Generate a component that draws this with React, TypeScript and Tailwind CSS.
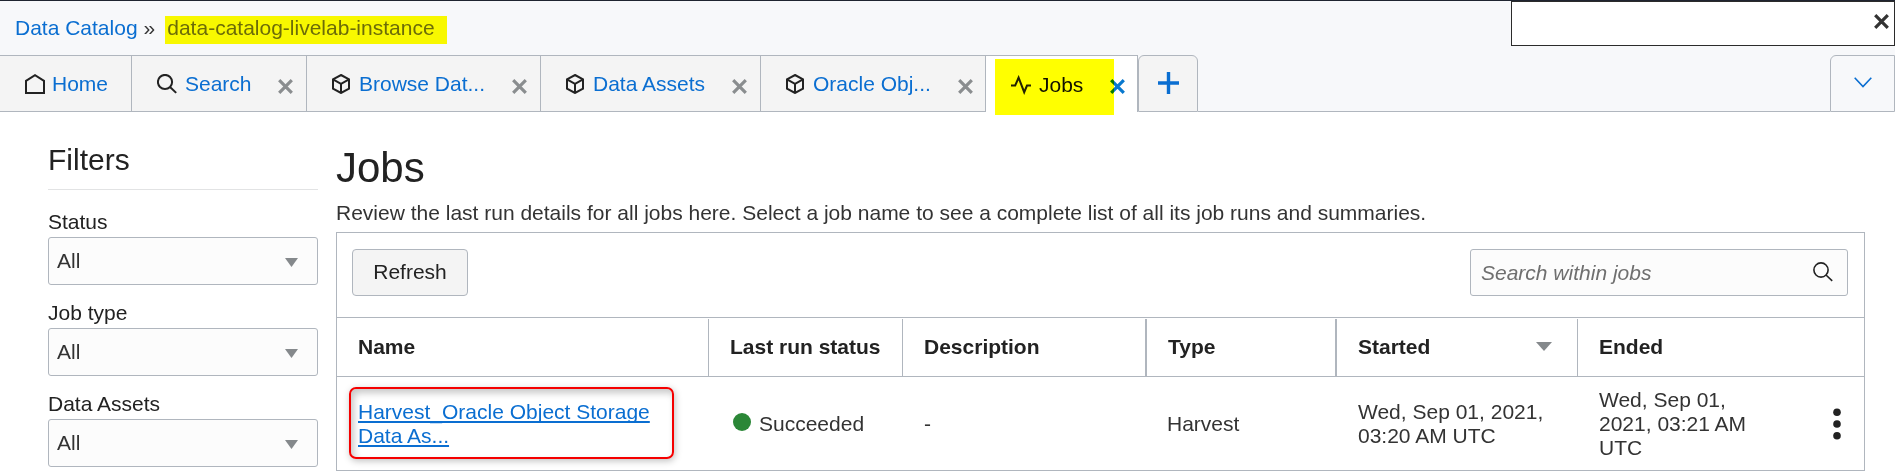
import React from "react";

type IconProps = { className?: string };

const HomeIcon = () => (
  <svg width="20" height="20" viewBox="0 0 20 20" fill="none" stroke="#222" strokeWidth="2">
    <path d="M1 19V6.8L10 1.2L19 6.8V19Z" />
  </svg>
);

const SearchIcon = ({ className = "" }: IconProps) => (
  <svg className={className} width="20" height="20" viewBox="0 0 20 20" fill="none" stroke="#222">
    <circle cx="8" cy="8" r="7.1" />
    <path d="M13 13L19.2 18.9" />
  </svg>
);

const CubeIcon = () => (
  <svg width="20" height="20" viewBox="0 0 20 20" fill="none" stroke="#222" strokeWidth="2">
    <path d="M9 1L17 5.4V14.6L9 19L1 14.6V5.4Z" />
    <path d="M1 5.4L9 9.8L17 5.4M9 9.8V19" />
  </svg>
);

const PulseIcon = () => (
  <svg width="20" height="20" viewBox="0 0 20 20" fill="none" stroke="#222" strokeWidth="2">
    <path d="M0 10.5H4.2L7.6 2.6L13.2 17.2L16 10.5H20" />
  </svg>
);

const CloseIcon = ({ className = "" }: IconProps) => (
  <svg className={className} width="15" height="15" viewBox="0 0 15 15" fill="none" stroke="currentColor" strokeWidth="3.2">
    <path d="M1.2 1.2L13.8 13.8M13.8 1.2L1.2 13.8" />
  </svg>
);

const Caret = ({ className = "" }: IconProps) => (
  <svg className={className} width="16" height="9" viewBox="0 0 16 9" preserveAspectRatio="none">
    <path d="M0 0H16L8 9Z" fill="#85898c" />
  </svg>
);

function Tab({ width, icon, label }: { width: string; icon: React.ReactNode; label: string }) {
  return (
    <div className={`flex items-center border-y border-r border-[#b0b6be] bg-[#f4f4f4] pl-[25px] ${width}`}>
      {icon}
      <span className="ml-[7px] whitespace-nowrap text-[#0a6ed1]">{label}</span>
      {label !== "Home" && <CloseIcon className="ml-auto mt-[5px] text-[#8a8d8f]" />}
    </div>
  );
}

function Filter({ label }: { label: string }) {
  return (
    <div className="flex h-[91px] flex-col">
      <label className="h-[27px] leading-[24px] text-[#222]">{label}</label>
      <div className="flex h-[48px] items-center justify-between rounded-[3px] border border-[#b0b6be] bg-[#fcfcfc] pl-[8px] pr-[19px]">
        <span>All</span>
        <Caret className="mt-[3px] h-[9px] w-[13px]" />
      </div>
    </div>
  );
}

const columns = "grid grid-cols-[372px_194px_244px_190px_241px_285px]";
const head = "flex items-center border-[#b0b6be] pb-[2px] pl-[21px]";
const cell = "flex items-center pl-[21px]";

export default function App() {
  return (
    <div className="flex h-[471px] w-[1895px] flex-col overflow-hidden bg-white font-['Liberation_Sans',Arial,sans-serif] text-[21px] leading-[24px] text-[#333]">
      <header className="flex h-[55px] shrink-0 justify-between border-t border-[#1f2430] bg-[#f7f8fa]">
        <nav className="flex items-start pl-[15px] pt-[15px]">
          <span className="text-[#0a6ed1]">Data Catalog</span>
          <span className="ml-[6px]">»</span>
          <span className="ml-[10px] h-[28px] w-[282px] bg-[#f8f800] pl-[2px] text-[#6c6c08]">
            data-catalog-livelab-instance
          </span>
        </nav>
        <div className="flex h-[45px] w-[384px] items-start justify-end border border-[#2b2b2b] bg-white pr-[5px] pt-[12px]">
          <CloseIcon className="text-[#333]" />
        </div>
      </header>

      <div className="flex h-[57px] shrink-0 bg-[#f7f8fa]">
        <Tab width="w-[132px]" icon={<HomeIcon />} label="Home" />
        <Tab width="w-[175px] pr-[13px]" icon={<SearchIcon className="mr-[1px] stroke-[2]" />} label="Search" />
        <Tab width="w-[234px] pr-[13px]" icon={<CubeIcon />} label="Browse Dat..." />
        <Tab width="w-[220px] pr-[13px]" icon={<CubeIcon />} label="Data Assets" />
        <Tab width="w-[225px] pr-[12px]" icon={<CubeIcon />} label="Oracle Obj..." />
        <div className="relative flex w-[152px] items-center border-r border-t border-[#b0b6be] bg-white pl-[25px] pr-[12px] pt-[1px]">
          <PulseIcon />
          <span className="ml-[8px] text-[#111]">Jobs</span>
          <CloseIcon className="ml-auto mt-[4px] text-[#0878ce]" />
          <div className="absolute left-[9px] top-[3px] z-10 h-[56px] w-[119px] bg-[#ffff00] mix-blend-multiply" />
        </div>
        <div className="flex w-[60px] items-center justify-center rounded-t-[6px] border border-[#b0b6be] bg-[#f4f4f4]">
          <svg className="-mt-[2px] ml-[1px]" width="21" height="22" viewBox="0 0 21 22" fill="none" stroke="#0a6ed1" strokeWidth="3.4">
            <path d="M10.5 0V22M0 11H21" />
          </svg>
        </div>
        <div className="flex-1 border-b border-[#b0b6be]" />
        <div className="flex w-[65px] items-center justify-center rounded-tl-[6px] border border-[#b0b6be]">
          <svg className="-mt-[3px]" width="18" height="11" viewBox="0 0 18 11" fill="none" stroke="#0a6ed1" strokeWidth="1.6">
            <path d="M.7 .7L9 9.6L17.3 .7" />
          </svg>
        </div>
      </div>

      <main className="flex h-[359px] shrink-0 pl-[48px]">
        <aside className="flex w-[270px] shrink-0 flex-col">
          <h2 className="h-[78px] shrink-0 border-b border-[#e2e3e4] pt-[30px] text-[30px] leading-[36px] text-[#222]">Filters</h2>
          <div className="flex flex-col pt-[20px]">
            <Filter label="Status" />
            <Filter label="Job type" />
            <Filter label="Data Assets" />
          </div>
        </aside>

        <section className="ml-[18px] flex w-[1529px] shrink-0 flex-col">
          <h1 className="h-[89px] shrink-0 pt-[32px] text-[42px] leading-[48px] text-[#222]">Jobs</h1>
          <p className="h-[31px] shrink-0 whitespace-nowrap">
            Review the last run details for all jobs here. Select a job name to see a complete list of all its job runs and summaries.
          </p>
          <div className="flex h-[239px] shrink-0 flex-col border border-[#b0b6be]">
            <div className="flex h-[84px] shrink-0 items-start justify-between pl-[15px] pr-[16px] pt-[16px]">
              <button className="h-[47px] w-[116px] rounded-[4px] border border-[#b0b6be] bg-[#f4f4f4] pb-[2px] text-[#222]">Refresh</button>
              <div className="flex h-[47px] w-[378px] items-center justify-between rounded-[3px] border border-[#b0b6be] bg-[#fcfcfc] pl-[10px] pr-[14px]">
                <span className="italic text-[#6f6f6f]">Search within jobs</span>
                <SearchIcon className="-mt-[2px] stroke-[1.6]" />
              </div>
            </div>
            <div className={`${columns} h-[60px] shrink-0 border-y border-[#b0b6be] pt-[1px] font-bold text-[#222]`}>
              <div className={`${head} border-r`}>Name</div>
              <div className={`${head} border-r`}>Last run status</div>
              <div className={`${head} border-r-2`}>Description</div>
              <div className={`${head} border-r-2`}>Type</div>
              <div className={`${head} justify-between border-r pr-[25px]`}>
                Started
                <Caret />
              </div>
              <div className={head}>Ended</div>
            </div>
            <div className={`${columns} h-[93px] shrink-0`}>
              <div className={`${cell} relative`}>
                <div className="absolute left-[12px] top-[10px] h-[72px] w-[325px] rounded-[7px] border-[2px] border-[#f50000] shadow-[1px_2px_7px_rgba(0,0,0,0.25),inset_3px_4px_7px_rgba(0,0,0,0.22)]" />
                <a className="relative text-[#0a6ed1] underline decoration-2 underline-offset-[2px] [text-decoration-skip-ink:none]">
                  Harvest_Oracle Object Storage
                  <br />
                  Data As...
                </a>
              </div>
              <div className="flex items-center pl-[24px]">
                <span className="-mt-[3px] mr-[8px] h-[18px] w-[18px] rounded-full bg-[#2b8737]" />
                Succeeded
              </div>
              <div className={cell}>-</div>
              <div className="flex items-center pl-[20px]">Harvest</div>
              <div className={cell}>
                Wed, Sep 01, 2021,
                <br />
                03:20 AM UTC
              </div>
              <div className="flex items-center justify-between pl-[21px] pr-[22px]">
                <span>
                  Wed, Sep 01,
                  <br />
                  2021, 03:21 AM
                  <br />
                  UTC
                </span>
                <svg width="8" height="32" viewBox="0 0 8 32" fill="#222">
                  <circle cx="4" cy="4.3" r="3.8" />
                  <circle cx="4" cy="16" r="3.8" />
                  <circle cx="4" cy="27.7" r="3.8" />
                </svg>
              </div>
            </div>
          </div>
        </section>
      </main>
    </div>
  );
}
